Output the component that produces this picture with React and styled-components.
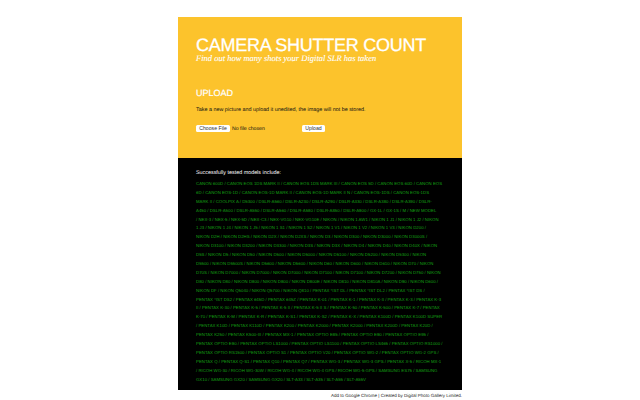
import React from "react";
import styled, { createGlobalStyle } from "styled-components";

const Global = createGlobalStyle`
  html, body { margin: 0; padding: 0; background: #fff; }
  body { font-family: "Liberation Sans", Arial, sans-serif; text-rendering: geometricPrecision; }
`;

const Page = styled.div`
  width: 284px;
  margin: 17px auto 0;
`;

const Hero = styled.header`
  background: #fcc32c;
  height: 141px;
  padding: 18px 18px 0;
  box-sizing: border-box;
  color: #fff;
`;

const Title = styled.h1`
  margin: 0;
  font-size: 18px;
  line-height: 20px;
  font-weight: 400;
  letter-spacing: -0.25px;
  -webkit-text-stroke: 0.3px #fff;
  white-space: nowrap;
`;

const Tagline = styled.p`
  margin: -1px 0 0;
  font-family: "Liberation Serif", "DejaVu Serif", serif;
  font-style: italic;
  font-weight: 400;
  font-size: 8.5px;
  line-height: 9px;
  -webkit-text-stroke: 0.1px #fff;
  white-space: nowrap;
`;

const SectionTitle = styled.h2`
  margin: 24px 0 0;
  font-size: 9px;
  line-height: 12px;
  font-weight: 400;
  -webkit-text-stroke: 0.2px #fff;
`;

const Lead = styled.p`
  margin: 7px 0 0;
  font-size: 5.4px;
  line-height: 8px;
  color: #111;
  white-space: nowrap;
`;

const Form = styled.form`
  display: flex;
  align-items: center;
  margin-top: 11px;
  font-size: 5.2px;
  color: #111;
`;

const Pill = styled.button`
  border: 0;
  padding: 0;
  height: 7px;
  width: ${(p) => p.$w}px;
  background: #fff;
  border-radius: 1.5px;
  font: inherit;
  color: #333;
  line-height: 7px;
`;

const FileName = styled.span`
  width: 72px;
  padding-left: 2px;
  box-sizing: border-box;
`;

const Models = styled.section`
  background: #000;
  height: 232px;
  padding: 11px 18px 0;
  box-sizing: border-box;
`;

const ModelsTitle = styled.h3`
  margin: 0 0 3px;
  font-size: 5.4px;
  line-height: 8px;
  font-weight: 400;
  color: #fff;
`;

const Line = styled.div`
  font-size: 4.33px;
  line-height: 8.9px;
  height: 8.9px;
  color: #14a014;
  white-space: nowrap;
`;

const Footer = styled.footer`
  margin-top: 2px;
  text-align: right;
  font-size: 4.5px;
  line-height: 8px;
  color: #222;
`;

const lines = [
  "CANON 600D / CANON EOS 1DS MARK II / CANON EOS 1DS MARK III / CANON EOS 5D / CANON EOS 60D / CANON EOS",
  "6D / CANON EOS-1D / CANON EOS-1D MARK II / CANON EOS-1D MARK II N / CANON EOS-1DS / CANON EOS-1DS",
  "MARK II / COOLPIX A / D5300 / DSLR-A560 / DSLR-A230 / DSLR-A290 / DSLR-A330 / DSLR-A380 / DSLR-A390 / DSLR-",
  "A450 / DSLR-A500 / DSLR-A550 / DSLR-A560 / DSLR-A580 / DSLR-A850 / DSLR-A900 / GX-1L / GX-1S / M / NEW MODEL",
  "/ NEX-3 / NEX-5 / NEX-5D / NEX-C3 / NEX-VG10 / NEX-VG10E / NIKON / NIKON 1 AW1 / NIKON 1 J1 / NIKON 1 J2 / NIKON",
  "1 J3 / NIKON 1 J4 / NIKON 1 J5 / NIKON 1 S1 / NIKON 1 S2 / NIKON 1 V1 / NIKON 1 V2 / NIKON 1 V3 / NIKON D200 /",
  "NIKON D2H / NIKON D2HS / NIKON D2X / NIKON D2XS / NIKON D3 / NIKON D300 / NIKON D3000 / NIKON D3000S /",
  "NIKON D3100 / NIKON D3200 / NIKON D3300 / NIKON D3S / NIKON D3X / NIKON D4 / NIKON D40 / NIKON D40X / NIKON",
  "D5S / NIKON D5 / NIKON D50 / NIKON D500 / NIKON D5000 / NIKON D5100 / NIKON D5200 / NIKON D5300 / NIKON",
  "D5500 / NIKON D5500S / NIKON D5600 / NIKON D5600 / NIKON D60 / NIKON D600 / NIKON D610 / NIKON D70 / NIKON",
  "D70S / NIKON D7000 / NIKON D7000 / NIKON D7000 / NIKON D7100 / NIKON D7100 / NIKON D7200 / NIKON D750 / NIKON",
  "D80 / NIKON D80 / NIKON D800 / NIKON D800 / NIKON D800E / NIKON D810 / NIKON D810A / NIKON D90 / NIKON D600 /",
  "NIKON DF / NIKON Q5040 / NIKON Q5700 / NIKON Q810 / PENTAX *IST DL / PENTAX *IST DL2 / PENTAX *IST DS /",
  "PENTAX *IST DS2 / PENTAX 645D / PENTAX 645Z / PENTAX K-01 / PENTAX K-1 / PENTAX K-3 / PENTAX K-3 / PENTAX K-3",
  "II / PENTAX K-30 / PENTAX K-5 / PENTAX K-5 II / PENTAX K-5 II S / PENTAX K-50 / PENTAX K-500 / PENTAX K-7 / PENTAX",
  "K-70 / PENTAX K-M / PENTAX K-R / PENTAX K-S1 / PENTAX K-S2 / PENTAX K-X / PENTAX K100D / PENTAX K100D SUPER",
  "/ PENTAX K10D / PENTAX K110D / PENTAX K200 / PENTAX K2000 / PENTAX K2000 / PENTAX K200D / PENTAX K20D /",
  "PENTAX K250 / PENTAX K500-III / PENTAX MX-1 / PENTAX OPTIO E85 / PENTAX OPTIO E90 / PENTAX OPTIO E95 /",
  "PENTAX OPTIO E90 / PENTAX OPTIO LS1000 / PENTAX OPTIO LS1100 / PENTAX OPTIO LS465 / PENTAX OPTIO RS1000 /",
  "PENTAX OPTIO RS1500 / PENTAX OPTIO S1 / PENTAX OPTIO V20 / PENTAX OPTIO WG-2 / PENTAX OPTIO WG-2 GPS /",
  "PENTAX Q / PENTAX Q-S1 / PENTAX Q10 / PENTAX Q7 / PENTAX WG-3 / PENTAX WG-3 GPS / PENTAX X-5 / RICOH MX-1",
  "/ RICOH WG-30 / RICOH WG-30W / RICOH WG-4 / RICOH WG-4 GPS / RICOH WG-5 GPS / SAMSUNG ES75 / SAMSUNG",
  "GX10 / SAMSUNG GX20 / SAMSUNG GX20 / SLT-A33 / SLT-A35 / SLT-A55 / SLT-A55V",
];

export default function App() {
  return (
    <Page>
      <Global />
      <Hero>
        <Title>CAMERA SHUTTER COUNT</Title>
        <Tagline>Find out how many shots your Digital SLR has taken</Tagline>
        <SectionTitle>UPLOAD</SectionTitle>
        <Lead>Take a new picture and upload it unedited, the image will not be stored.</Lead>
        <Form onSubmit={(e) => e.preventDefault()}>
          <Pill type="button" $w={34}>Choose File</Pill>
          <FileName>No file chosen</FileName>
          <Pill type="submit" $w={23}>Upload</Pill>
        </Form>
      </Hero>
      <Models>
        <ModelsTitle>Successfully tested models include:</ModelsTitle>
        {lines.map((l, i) => (
          <Line key={i}>{l}</Line>
        ))}
      </Models>
      <Footer>Add to Google Chrome | Created by Digital Photo Gallery Limited.</Footer>
    </Page>
  );
}
